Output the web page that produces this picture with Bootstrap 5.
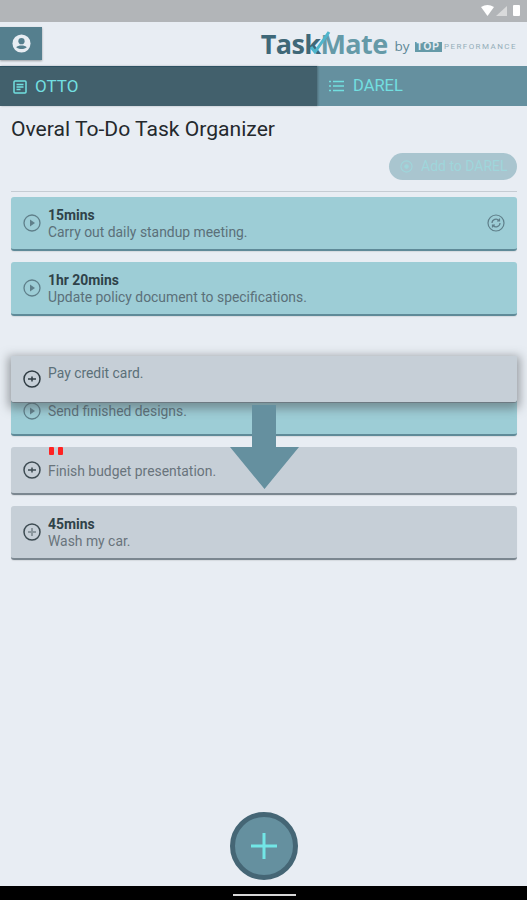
<!DOCTYPE html>
<html lang="en">
<head>
    <meta charset="UTF-8">
    <title>TaskMate</title>
    <link href="https://cdn.jsdelivr.net/npm/bootstrap@5.3.2/dist/css/bootstrap.min.css" rel="stylesheet">
    <style>
        html, body { height: 100%; }
        body {
            background: #e8edf3;
            font-family: Roboto, "Liberation Sans", sans-serif;
            width: 527px;
            height: 900px;
            overflow: hidden;
        }
        .app { position: relative; height: 900px; }
        .status-bar { height: 22px; background: #b2b5b8; padding-right: 6px; }
        .top-bar { height: 44px; padding-right: 10px; }
        .profile-btn {
            width: 42px; height: 33px; margin-top: -1px;
            background: #557f8e; box-shadow: 0 1px 2px rgba(0,0,0,.35);
        }
        .logo-text {
            font-family: "Open Sans", "Liberation Sans", sans-serif;
            font-weight: 700; font-size: 27px; line-height: 1; margin-top: -2px;
            letter-spacing: -.6px; color: #3f6878; position: relative;
        }
        .logo-text .part-b { color: #659aa8; }
        .logo-check { position: absolute; left: 40px; top: 0; }
        .logo-by { font-size: 13.5px; color: #5d8796; margin: 5px 5px 0 7px; font-family: "Open Sans", sans-serif; }
        .logo-top {
            background: #659aa8; color: #e8edf3; font-weight: 900; font-size: 10px; line-height: 10px;
            padding: 0 2px; letter-spacing: 1px; margin: 5px 2px 0 0; font-family: "Liberation Sans", sans-serif;
        }
        .logo-perf { font-size: 8px; color: #94aeb9; margin-top: 5px; letter-spacing: 1.45px; }
        .tabs-row { height: 40px; }
        .tab-a {
            width: 317px; background: #42606c; color: #72dfe0; font-size: 17px;
            padding-left: 13px; border-top: 1px solid #2d5162; box-shadow: 1px 0 2px rgba(0,0,0,.25); z-index: 1;
        }
        .tab-b { flex: 1; background: #65909f; color: #72dfe0; font-size: 16.5px; padding-left: 12px; gap: 9px; }
        .page-title { font-size: 21.1px; line-height: 24px; color: #24292d; margin: 11px 0 0 11px; font-weight: 400; }
        .add-wrap { padding: 12px 10px 0 0; }
        .add-pill {
            width: 128px; height: 27px; border-radius: 14px; background: #a9c5cf; color: #9fd6db;
            font-size: 14px; padding-left: 11px; gap: 8px;
        }
        .rule { height: 1px; background: #c5ccd3; margin: 11px 10px 0 11px; }
        .task-list { padding: 5px 10px 0 11px; }
        .task-row {
            border-radius: 3px; border-bottom: 2px solid #5f8a98; padding-left: 12px; margin-bottom: 11px;
            box-shadow: 0 1px 1px rgba(0,0,0,.08);
        }
        .task-teal { background: #9dcdd6; height: 54px; }
        .task-grey { background: #c6cfd7; border-bottom-color: #7b8790; }
        .task-text { margin-left: 7px; padding-top: 2px; font-size: 13.9px; line-height: 17px; color: #5b7079; }
        .task-grey .task-text { color: #69747c; }
        .task-time { font-weight: 700; color: #2f4249; }
        .row-send { height: 75px; margin-top: 45px; padding-top: 41px; }
        .row-send .task-text { padding-top: 1px; }
        .row-budget { height: 48px; position: relative; }
        .row-wash { height: 54px; }
        .red-marks { position: absolute; left: 38px; top: 0; display: flex; gap: 4px; }
        .red-marks i { display: block; width: 5px; height: 8px; background: #f22; border-radius: 1px; }
        .drag-card {
            position: absolute; left: 11px; top: 356px; width: 506px; height: 47px;
            background: #c6cfd7; padding: 6px 0 0 12px; border-radius: 0 0 3px 3px;
            border-bottom: 1px solid #6d7a82;
            box-shadow: 0 3px 10px 3px rgba(80,85,90,.5);
        }
        .drag-card .task-text { padding-top: 3px; }
        .drag-arrow { position: absolute; left: 230px; top: 405px; }
        .fab {
            position: absolute; left: 230px; top: 812px; width: 68px; height: 68px;
            border-radius: 50%; background: #65909f; border: 5px solid #456675;
        }
        .nav-strip { position: absolute; left: 0; right: 0; top: 886px; height: 14px; background: #000; }
        .home-line { width: 63px; height: 2px; background: #d8d8d8; margin: 8px 0 0 233px; }
    </style>
</head>
<body>
<div class="app">
    <div class="status-bar d-flex justify-content-end align-items-center">
        <svg width="40" height="14" viewBox="0 0 40 14">
            <path d="M0 3 Q6.500 -1 13 3 L6.500 12Z" fill="#fff"/>
            <path d="M15 12 L26 2 V12Z" fill="#d9dadb"/>
            <rect x="32" y="1" width="7" height="11" rx="1" fill="#fff"/>
        </svg>
    </div>

    <div class="top-bar d-flex justify-content-between align-items-center">
        <div class="profile-btn d-flex justify-content-center align-items-center">
            <svg width="19" height="19" viewBox="0 0 20 20">
                <circle cx="10" cy="10" r="9.500" fill="#e8edf3"/>
                <circle cx="10" cy="7.500" r="3.300" fill="#557f8e"/>
                <path d="M4.500 14 C6 11.500 14 11.500 15.500 14 C13.500 16.500 6.500 16.500 4.500 14Z" fill="#557f8e"/>
            </svg>
        </div>
        <div class="d-flex align-items-center">
            <div class="logo-text">Task<span class="part-b">Mate</span>
                <svg class="logo-check" width="32" height="24" viewBox="0 0 32 24">
                    <path d="M10 17 L14 22 L28 2" fill="none" stroke="#4fb6cc" stroke-width="3"/>
                </svg>
            </div>
            <span class="logo-by">by</span>
            <span class="logo-top">TOP</span>
            <span class="logo-perf">PERFORMANCE</span>
        </div>
    </div>

    <div class="tabs-row d-flex">
        <div class="tab-a d-flex align-items-center gap-2">
            <svg width="14" height="14" viewBox="0 0 14 14" fill="none" stroke="#72dfe0" stroke-width="1.500">
                <rect x="1" y="1" width="12" height="12" rx="1"/>
                <path d="M3.500 4.500H10.500M3.500 7H10.500M3.500 9.500H7.500"/>
            </svg>
            <span>OTTO</span>
        </div>
        <div class="tab-b d-flex align-items-center">
            <svg width="15" height="12" viewBox="0 0 15 12" fill="none" stroke="#72dfe0" stroke-width="1.300">
                <path d="M0 1.500H2M4 1.500H15M0 6H2M4 6H15M0 10.500H2M4 10.500H15"/>
            </svg>
            <span>DAREL</span>
        </div>
    </div>

    <h1 class="page-title">Overal To-Do Task Organizer</h1>

    <div class="add-wrap d-flex justify-content-end">
        <div class="add-pill d-flex align-items-center">
            <svg width="13" height="13" viewBox="0 0 14 14" fill="none" stroke="#9fd6db" stroke-width="1.200">
                <circle cx="7" cy="7" r="6"/><circle cx="7" cy="7" r="1.800" fill="#9fd6db"/>
            </svg>
            <span>Add to DAREL</span>
        </div>
    </div>
    <div class="rule"></div>

    <div class="task-list">
        <div class="task-row task-teal d-flex align-items-center">
            <svg width="18" height="18" viewBox="0 0 18 18" fill="none" stroke="#5f7f8a" stroke-width="1.300">
                <circle cx="9" cy="9" r="8"/><path d="M7 5.500 L12 9 L7 12.500Z" fill="#5f7f8a" stroke="none"/>
            </svg>
            <div class="task-text flex-grow-1"><div class="task-time">15mins</div><div>Carry out daily standup meeting.</div></div>
            <svg class="me-2" width="18" height="18" viewBox="0 0 18 18" fill="none" stroke="#5f7f8a" stroke-width="1.200">
                <circle cx="9" cy="9" r="8"/>
                <path d="M5 9 A4 4 0 0 1 12 6.500 M13 9 A4 4 0 0 1 6 11.500 M12.500 4.500 V7 H10 M5.500 13.500 V11 H8"/>
            </svg>
            <span class="ms-1"></span>
        </div>
        <div class="task-row task-teal d-flex align-items-center">
            <svg width="18" height="18" viewBox="0 0 18 18" fill="none" stroke="#5f7f8a" stroke-width="1.300">
                <circle cx="9" cy="9" r="8"/><path d="M7 5.500 L12 9 L7 12.500Z" fill="#5f7f8a" stroke="none"/>
            </svg>
            <div class="task-text"><div class="task-time">1hr 20mins</div><div>Update policy document to specifications.</div></div>
        </div>
        <div class="task-row task-teal row-send d-flex">
            <svg width="18" height="18" viewBox="0 0 18 18" fill="none" stroke="#5f7f8a" stroke-width="1.300">
                <circle cx="9" cy="9" r="8"/><path d="M7 5.500 L12 9 L7 12.500Z" fill="#5f7f8a" stroke="none"/>
            </svg>
            <div class="task-text">Send finished designs.</div>
        </div>
        <div class="task-row task-grey row-budget d-flex align-items-center">
            <div class="red-marks"><i></i><i></i></div>
            <svg width="18" height="18" viewBox="0 0 18 18" fill="none" stroke="#3d4b52" stroke-width="1.500">
                <circle cx="9" cy="9" r="8"/><path d="M5 9H13M9 6.500V11.500"/>
            </svg>
            <div class="task-text">Finish budget presentation.</div>
        </div>
        <div class="task-row task-grey row-wash d-flex align-items-center">
            <svg width="18" height="18" viewBox="0 0 18 18" fill="none" stroke="#3d4b52" stroke-width="1.500">
                <circle cx="9" cy="9" r="8"/><path d="M5 9H13M9 5V13" stroke="#8b979e" stroke-width="2"/>
            </svg>
            <div class="task-text"><div class="task-time">45mins</div><div>Wash my car.</div></div>
        </div>
    </div>

    <!-- row being dragged -->
    <div class="drag-card d-flex">
        <svg class="mt-2" width="18" height="18" viewBox="0 0 18 18" fill="none" stroke="#2f3c43" stroke-width="1.500">
            <circle cx="9" cy="9" r="8"/><path d="M5 9H13M9 6.500V11.500"/>
        </svg>
        <div class="task-text">Pay credit card.</div>
    </div>

    <svg class="drag-arrow" width="69" height="84" viewBox="0 0 69 84">
        <path d="M22 0 H46 V42 H69 L34.500 84 L0 42 H22Z" fill="#65909f"/>
    </svg>

    <div class="fab d-flex justify-content-center align-items-center">
        <svg width="28" height="28" viewBox="0 0 28 28">
            <path d="M14 1V27M1 14H27" stroke="#72e6e6" stroke-width="3"/>
        </svg>
    </div>

    <div class="nav-strip"><div class="home-line"></div></div>
</div>
<script src="https://cdn.jsdelivr.net/npm/bootstrap@5.3.2/dist/js/bootstrap.bundle.min.js"></script>
</body>
</html>
